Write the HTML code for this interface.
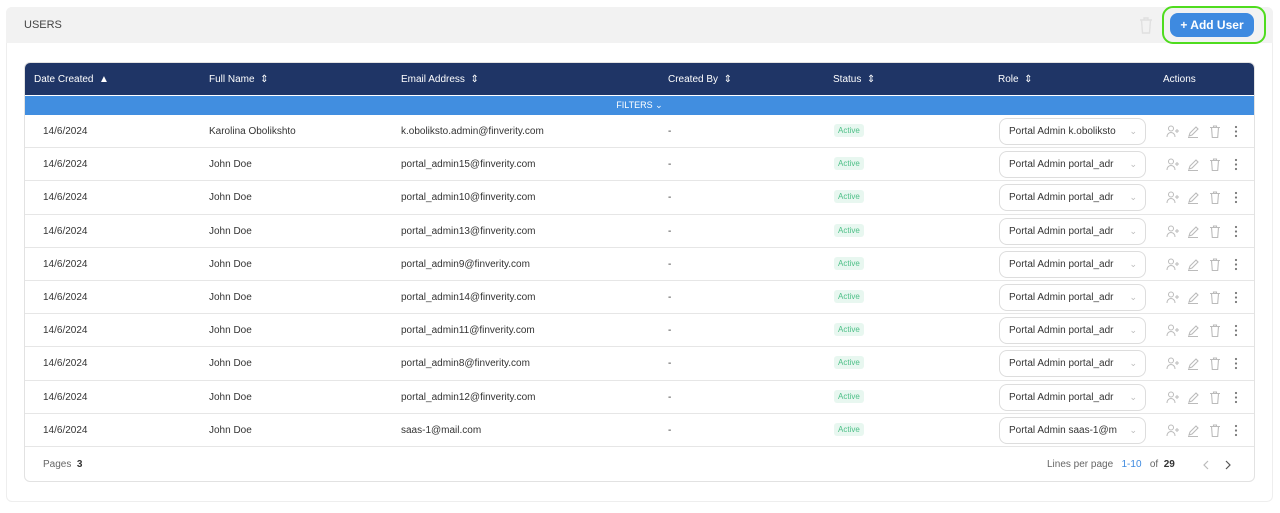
<!DOCTYPE html>
<html><head><style>
*{box-sizing:border-box;margin:0;padding:0}
body{width:1280px;height:513px;background:#fff;font-family:"Liberation Sans",sans-serif;color:#333;position:relative;overflow:hidden}
.outer{position:absolute;left:6px;top:7px;width:1267px;height:495px;border:1px solid #eee;border-radius:6px;background:#fff}
.hdr{position:absolute;left:6px;top:7px;width:1267px;height:36px;background:#f2f2f2;border-radius:6px 6px 0 0}
.hdr .t{position:absolute;left:18px;top:12px;font-size:11px;color:#444}
.btn{position:absolute;left:1170px;top:13px;width:84px;height:24px;background:#3e8ae0;border-radius:8px;color:#fff;font-weight:bold;font-size:12px;line-height:24px;text-align:center}
.ring{position:absolute;left:1162px;top:6px;width:104px;height:38px;border:2.5px solid #4fdc1e;border-radius:11px}
.trash{position:absolute;left:1139px;top:17px}
.tbl{position:absolute;left:24px;top:62px;width:1231px;height:420px;border:1px solid #e2e2e2;border-radius:6px;overflow:hidden}
.th{position:absolute;left:0;top:0;width:100%;height:32px;background:#1f3566;color:#fff;font-size:10px}
.th span,.row span,.row svg{position:absolute}
.th span{top:11px}
.fl{position:absolute;left:0;top:33px;width:100%;height:19px;background:#418ee0;color:#fff;font-size:9px;text-align:center;line-height:19px}
.row{position:absolute;left:0;width:100%;height:33.2px;border-bottom:1px solid #e6e6e6;font-size:10px;color:#333}
.row span{top:11px}
.row svg{top:10px}
.badge{top:9px!important;left:809px;background:#e8f7f0;color:#4cbf86;font-size:8px;padding:2px 4px;border-radius:3px}
.sel{top:3px!important;left:974px;width:147px;height:27px;border:1px solid #ddd;border-radius:8px;font-size:10px;line-height:25px;padding-left:9px;overflow:hidden;white-space:nowrap}
.sel i{position:absolute;right:8px;top:0;color:#bbb;font-style:normal;font-size:9px;background:#fff;padding-left:4px}
.ft{position:absolute;top:396px;font-size:10px;color:#666}
</style></head><body>
<div class="outer"></div>
<div class="hdr"><div class="t">USERS</div></div>
<svg class="trash" width="14" height="17" viewBox="0 0 14 17" fill="none" stroke="#e0e0e0" stroke-width="1.4"><path d="M1 3h12M5 3V1h4v2M2.5 3l1 13h7l1-13"/></svg>
<div class="ring"></div>
<div class="btn">+ Add User</div>
<div class="tbl">
<div class="th">
<span style="left:9px">Date Created &nbsp;▲</span>
<span style="left:184px">Full Name &nbsp;⇕</span>
<span style="left:376px">Email Address &nbsp;⇕</span>
<span style="left:643px">Created By &nbsp;⇕</span>
<span style="left:808px">Status &nbsp;⇕</span>
<span style="left:973px">Role &nbsp;⇕</span>
<span style="left:1138px">Actions</span>
</div>
<div class="fl">FILTERS ⌄</div>
<div id="rows"></div>
<div class="ft" style="left:18px">Pages &nbsp;<b style="color:#333">3</b></div>
<div class="ft" style="left:1022px">Lines per page &nbsp; <span style="color:#3e8ae0">1-10</span> &nbsp; of &nbsp;<b style="color:#333">29</b></div>
<svg style="position:absolute;left:1177px;top:396px" width="30" height="12" viewBox="0 0 30 12" fill="none" stroke-width="1.2"><path d="M6 2L2 6l4 4" stroke="#bbb"/><path d="M24 2l4 4-4 4" stroke="#555"/></svg>
</div>
<script>
var d=[["Karolina Obolikshto","k.oboliksto.admin@finverity.com","k.oboliksto"],["John Doe","portal_admin15@finverity.com","portal_adr"],["John Doe","portal_admin10@finverity.com","portal_adr"],["John Doe","portal_admin13@finverity.com","portal_adr"],["John Doe","portal_admin9@finverity.com","portal_adr"],["John Doe","portal_admin14@finverity.com","portal_adr"],["John Doe","portal_admin11@finverity.com","portal_adr"],["John Doe","portal_admin8@finverity.com","portal_adr"],["John Doe","portal_admin12@finverity.com","portal_adr"],["John Doe","saas-1@mail.com","saas-1@m"]];
var h="";
var ic='<svg style="left:1141px" width="14" height="13" viewBox="0 0 14 13" fill="none" stroke="#bbb" stroke-width="1"><circle cx="5" cy="3.5" r="2.5"/><path d="M1 12c0-3 2-4.5 4-4.5s4 1.5 4 4.5M11 4v4M9 6h4"/></svg>'+
'<svg style="left:1162px" width="12" height="13" viewBox="0 0 12 13" fill="none" stroke="#bbb" stroke-width="1.1"><path d="M2 11l1-3 6-6 2 2-6 6zM1 12.5h10"/></svg>'+
'<svg style="left:1184px" width="12" height="13" viewBox="0 0 12 13" fill="none" stroke="#bbb" stroke-width="1.1"><path d="M1 2.5h10M4.5 2.5V1h3v1.5M2.5 2.5l.8 10h5.4l.8-10"/></svg>'+
'<svg style="left:1209px" width="4" height="13" viewBox="0 0 4 13" fill="#777"><circle cx="2" cy="2" r="1.1"/><circle cx="2" cy="6.5" r="1.1"/><circle cx="2" cy="11" r="1.1"/></svg>';
d.forEach(function(r,i){h+='<div class="row" style="top:'+(52+i*33.2)+'px"><span style="left:18px">14/6/2024</span><span style="left:184px">'+r[0]+'</span><span style="left:376px">'+r[1]+'</span><span style="left:643px">-</span><span class="badge">Active</span><span class="sel">Portal Admin '+r[2]+'<i>⌄</i></span>'+ic+'</div>'});
document.getElementById("rows").outerHTML=h;
</script>
</body></html>
